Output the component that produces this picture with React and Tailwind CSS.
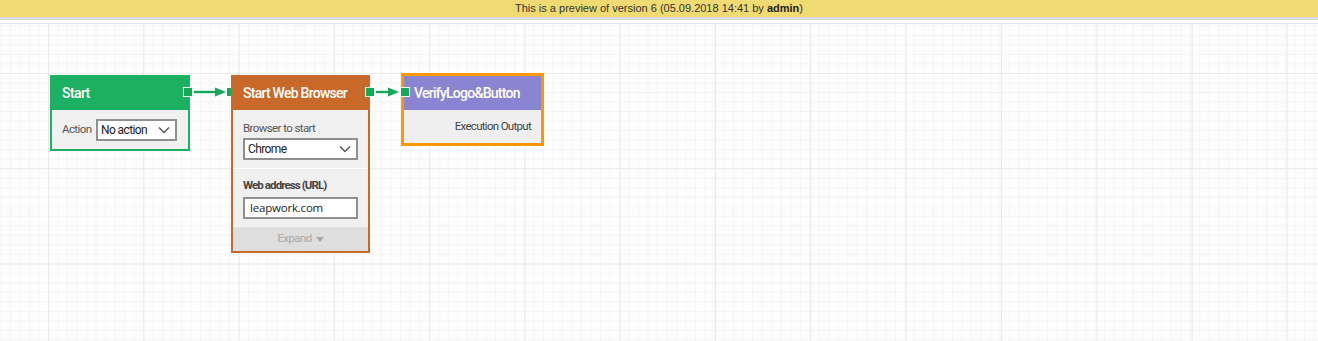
import React from "react";

function Port({ className = "" }) {
  return (
    <div
      className={`absolute w-[10px] h-[10px] bg-[#14a85a] border border-white ${className}`}
    />
  );
}

function Arrow({ className = "", w = 33 }) {
  return (
    <svg className={`absolute ${className}`} width={w} height="10" viewBox={`0 0 ${w} 10`}>
      <line x1="0" y1="5" x2={w - 9} y2="5" stroke="#14a85a" strokeWidth="2.4" />
      <polygon points={`${w - 11},0.5 ${w},5 ${w - 11},9.5`} fill="#14a85a" />
    </svg>
  );
}

function Chevron() {
  return (
    <svg width="12" height="8" viewBox="0 0 12 8" className="shrink-0">
      <polyline points="1,1.5 6,6.5 11,1.5" fill="none" stroke="#555" strokeWidth="1.4" />
    </svg>
  );
}

function Select({ text, className = "" }) {
  return (
    <div
      className={`flex items-center justify-between bg-white border-2 border-[#8f8f8f] pl-[3px] pr-[5px] text-[12px] tracking-[-0.6px] text-[#222] ${className}`}
    >
      <span>{text}</span>
      <Chevron />
    </div>
  );
}

export default function App() {
  const font = "font-['Roboto','Liberation_Sans',sans-serif]";
  return (
    <div className="w-[1318px] h-[341px] overflow-hidden bg-white flex flex-col">
      <div className="h-[17px] bg-[#efdb71] flex items-center justify-center text-[11px] text-[#333] font-['Liberation_Sans',Arial,sans-serif] leading-none">
        <span>
          This is a preview of version 6 (05.09.2018 14:41 by <b className="font-bold text-[#222]">admin</b>)
        </span>
      </div>
      <div className="h-[3px] bg-[#dcdcdc]" />
      <div className="h-[3px] bg-white" />
      <div className="h-[1px] bg-[#e6e6e6]" />
      <div
        className={`relative flex-1 bg-[#fdfdfd] ${font} [background-image:linear-gradient(to_right,#eaeaea_1px,transparent_1px),linear-gradient(to_bottom,#eaeaea_1px,transparent_1px),linear-gradient(to_right,#f4f4f4_1px,transparent_1px),linear-gradient(to_bottom,#f4f4f4_1px,transparent_1px)] [background-size:95.3px_95.3px,95.3px_95.3px,9.53px_9.53px,9.53px_9.53px] [background-position:48px_49px,48px_49px,48px_49px,48px_49px]`}
      >
        {/* Start node */}
        <div className="absolute left-[50px] top-[51px] w-[140px] h-[76px] border-2 border-[#1bb062] bg-[#f0f0f0] flex flex-col">
          <div className="h-[33px] bg-[#1bb062] flex items-center pl-[10px] text-white text-[14px] font-medium tracking-[-0.6px]">
            Start
          </div>
          <div className="flex-1 flex items-center justify-between pl-[10px] pr-[11px]">
            <span className="text-[11.5px] text-[#555] tracking-[-0.6px]">Action</span>
            <Select text="No action" className="w-[81px] h-[22px]" />
          </div>
        </div>
        <Port className="left-[183px] top-[63px]" />
        <Arrow className="left-[194px] top-[63px]" w={32} />
        <Port className="left-[226px] top-[63px]" />

        {/* Start Web Browser node */}
        <div className="absolute left-[231px] top-[51px] w-[139px] h-[178px] border-2 border-[#c8692a] bg-[#f0f0f0] flex flex-col">
          <div className="h-[33px] bg-[#c8692a] flex items-center pl-[10px] text-white text-[14px] font-medium tracking-[-0.75px]">
            Start Web Browser
          </div>
          <div className="flex flex-col px-[10px] pt-[11px] pb-[8px] border-b border-white">
            <span className="text-[11.5px] text-[#555] leading-[14px] tracking-[-0.6px]">Browser to start</span>
            <Select text="Chrome" className="mt-[3px] h-[22px]" />
          </div>
          <div className="flex flex-col px-[10px] pt-[9px] pb-[8px]">
            <span className="text-[11.5px] text-[#444] font-bold leading-[14px] tracking-[-0.9px]">Web address (URL)</span>
            <div className="mt-[5px] h-[22px] bg-white border-2 border-[#8f8f8f] flex items-center pl-[5px] text-[11.5px] tracking-[-0.2px] text-[#222] font-['Open_Sans',sans-serif]">
              leapwork.com
            </div>
          </div>
          <div className="flex-1 bg-[#dedede] flex items-center justify-center gap-[4px] text-[11.5px] text-[#a8a8a8] tracking-[-0.6px]">
            <span>Expand</span>
            <svg width="8" height="5" viewBox="0 0 8 5">
              <polygon points="0,0 8,0 4,5" fill="#a8a8a8" />
            </svg>
          </div>
        </div>
        <Port className="left-[365px] top-[63px]" />
        <Arrow className="left-[376px] top-[63px]" w={23} />

        {/* VerifyLogo&Button node (selected) */}
        <div className="absolute left-[401px] top-[49px] w-[143px] h-[73px] border-[3px] border-[#ff9800] bg-[#efefef] flex flex-col">
          <div className="h-[34px] bg-[#8985d3] flex items-center pl-[10px] text-white text-[14px] font-medium tracking-[-0.75px]">
            VerifyLogo&amp;Button
          </div>
          <div className="flex-1 flex items-center justify-end pr-[10px] text-[11.5px] text-[#444] tracking-[-0.7px]">
            Execution Output
          </div>
        </div>
        <Port className="left-[400px] top-[63px]" />
      </div>
    </div>
  );
}
